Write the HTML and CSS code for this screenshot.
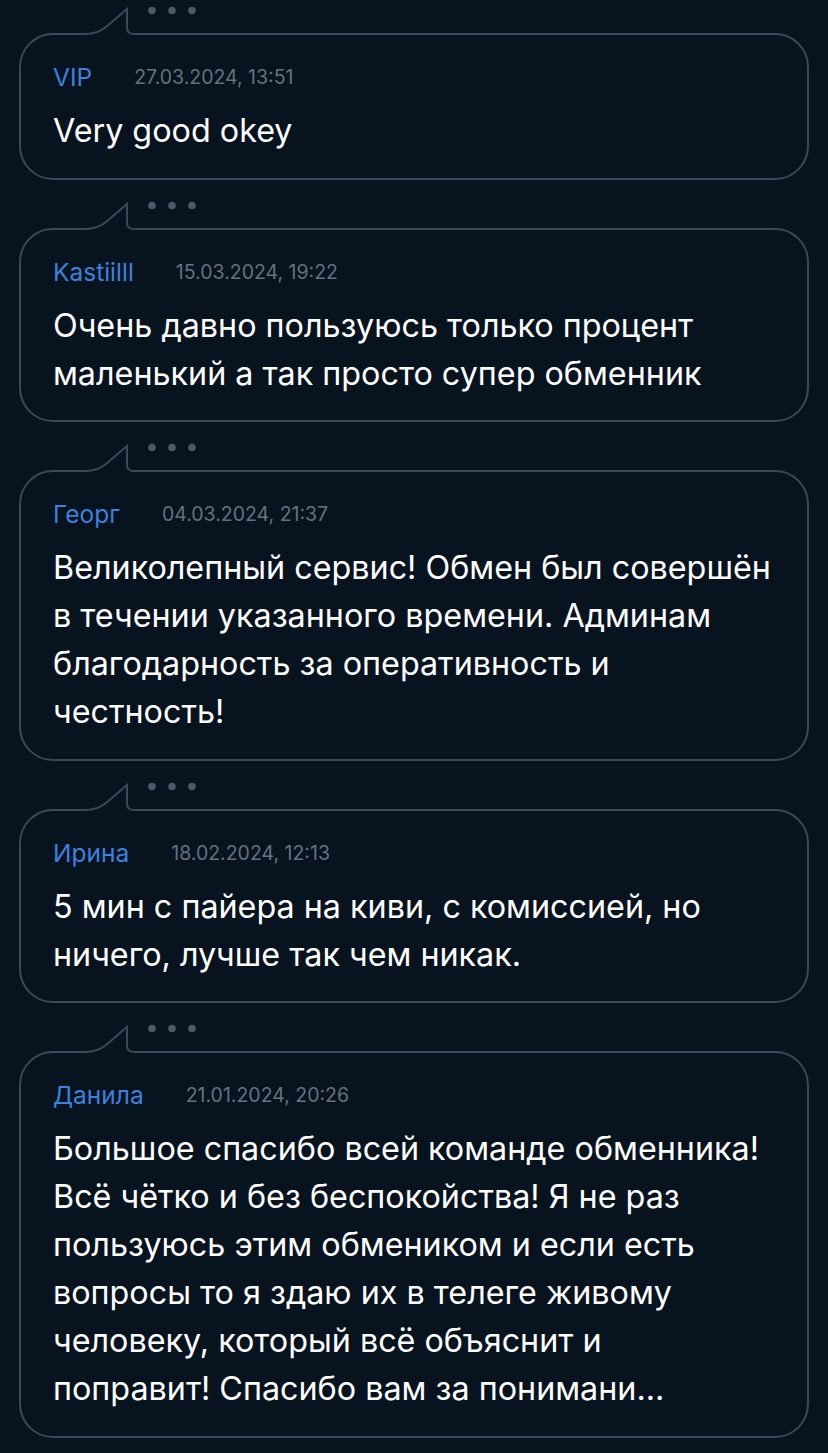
FILE: index.html
```html
<!DOCTYPE html>
<html lang="ru">

<head>
    <meta charset="utf-8">
    <meta name="viewport" content="width=device-width, initial-scale=1.0">
    <title>Отзывы</title>
    <link rel="stylesheet" href="styles.css">
</head>

<body>
    <main class="reviews">

        <article class="review">
            <svg class="review-tab" viewBox="0 0 200 36" width="200" height="36">
                <rect x="67" y="31" width="48" height="4" class="tab-cover" />
                <path d="M66 33 H67 C77 33 82 30 87 26 L108 8 V27 Q108 33 115 33 H117" class="tab-line" />
                <circle cx="133" cy="9.5" r="3.8" class="tab-dot" />
                <circle cx="153" cy="9.5" r="3.8" class="tab-dot" />
                <circle cx="173" cy="9.5" r="3.8" class="tab-dot" />
            </svg>
            <div class="review-head">
                <span class="review-name">VIP</span>
                <span class="review-date">27.03.2024, 13:51</span>
            </div>
            <p class="review-text">Very good okey</p>
        </article>

        <article class="review">
            <svg class="review-tab" viewBox="0 0 200 36" width="200" height="36">
                <rect x="67" y="31" width="48" height="4" class="tab-cover" />
                <path d="M66 33 H67 C77 33 82 30 87 26 L108 8 V27 Q108 33 115 33 H117" class="tab-line" />
                <circle cx="133" cy="9.5" r="3.8" class="tab-dot" />
                <circle cx="153" cy="9.5" r="3.8" class="tab-dot" />
                <circle cx="173" cy="9.5" r="3.8" class="tab-dot" />
            </svg>
            <div class="review-head">
                <span class="review-name">Kastiilll</span>
                <span class="review-date">15.03.2024, 19:22</span>
            </div>
            <p class="review-text">Очень давно пользуюсь только процент маленький а так просто супер обменник</p>
        </article>

        <article class="review">
            <svg class="review-tab" viewBox="0 0 200 36" width="200" height="36">
                <rect x="67" y="31" width="48" height="4" class="tab-cover" />
                <path d="M66 33 H67 C77 33 82 30 87 26 L108 8 V27 Q108 33 115 33 H117" class="tab-line" />
                <circle cx="133" cy="9.5" r="3.8" class="tab-dot" />
                <circle cx="153" cy="9.5" r="3.8" class="tab-dot" />
                <circle cx="173" cy="9.5" r="3.8" class="tab-dot" />
            </svg>
            <div class="review-head">
                <span class="review-name">Георг</span>
                <span class="review-date">04.03.2024, 21:37</span>
            </div>
            <p class="review-text">Великолепный сервис! Обмен был совершён в течении указанного времени. Админам благодарность за оперативность и честность!</p>
        </article>

        <article class="review">
            <svg class="review-tab" viewBox="0 0 200 36" width="200" height="36">
                <rect x="67" y="31" width="48" height="4" class="tab-cover" />
                <path d="M66 33 H67 C77 33 82 30 87 26 L108 8 V27 Q108 33 115 33 H117" class="tab-line" />
                <circle cx="133" cy="9.5" r="3.8" class="tab-dot" />
                <circle cx="153" cy="9.5" r="3.8" class="tab-dot" />
                <circle cx="173" cy="9.5" r="3.8" class="tab-dot" />
            </svg>
            <div class="review-head">
                <span class="review-name">Ирина</span>
                <span class="review-date">18.02.2024, 12:13</span>
            </div>
            <p class="review-text">5 мин с пайера на киви, с комиссией, но ничего, лучше так чем никак.</p>
        </article>

        <article class="review">
            <svg class="review-tab" viewBox="0 0 200 36" width="200" height="36">
                <rect x="67" y="31" width="48" height="4" class="tab-cover" />
                <path d="M66 33 H67 C77 33 82 30 87 26 L108 8 V27 Q108 33 115 33 H117" class="tab-line" />
                <circle cx="133" cy="9.5" r="3.8" class="tab-dot" />
                <circle cx="153" cy="9.5" r="3.8" class="tab-dot" />
                <circle cx="173" cy="9.5" r="3.8" class="tab-dot" />
            </svg>
            <div class="review-head">
                <span class="review-name">Данила</span>
                <span class="review-date">21.01.2024, 20:26</span>
            </div>
            <p class="review-text">Большое спасибо всей команде обменника! Всё чётко и без беспокойства! Я не раз пользуюсь этим обмеником и если есть вопросы то я здаю их в телеге живому человеку, который всё объяснит и<br>поправит! Спасибо вам за понимани...</p>
        </article>

    </main>
</body>

</html>
```

FILE: styles.css
```css
body {
    margin: 0;
    background-color: #07131f;
    font-family: Inter, "Liberation Sans", sans-serif;
    color: #ffffff;
}

.reviews {
    display: flex;
    flex-direction: column;
    gap: 48px;
    padding: 33px 19px 18px;
}

.review {
    position: relative;
    border: 2px solid #3a4859;
    border-radius: 34px;
    padding: 27px 30px 22.5px 32px;
}

.review-tab {
    position: absolute;
    left: -2px;
    top: -34px;
    overflow: visible;
}

.tab-cover {
    fill: #07131f;
}

.tab-line {
    fill: none;
    stroke: #3a4859;
    stroke-width: 2;
}

.tab-dot {
    fill: #4b5969;
}

.review-head {
    display: flex;
    align-items: center;
    gap: 42px;
    line-height: 30px;
}

.review-name {
    font-size: 24.5px;
    color: #3b82dd;
}

.review-date {
    font-size: 19.5px;
    color: #65717f;
}

.review-text {
    margin: 15px 0 0;
    font-size: 32.3px;
    line-height: 48px;
}
```
